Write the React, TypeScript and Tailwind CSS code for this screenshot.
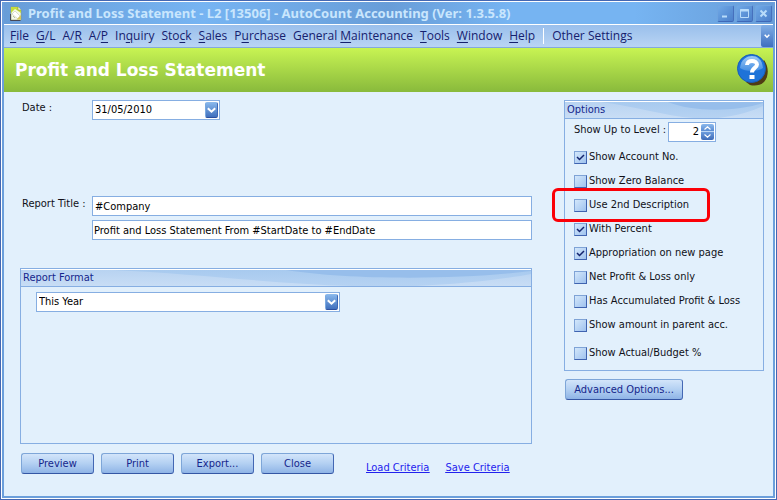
import { useState, type ReactNode } from "react";

const uiFont = "font-['DejaVu_Sans_Condensed','DejaVu_Sans',sans-serif]";

const menuItems: [string, string, string][] = [
  ["", "F", "ile"],
  ["", "G", "/L"],
  ["A/", "R", ""],
  ["A/", "P", ""],
  ["In", "q", "uiry"],
  ["Sto", "c", "k"],
  ["", "S", "ales"],
  ["P", "u", "rchase"],
  ["General ", "M", "aintenance"],
  ["", "T", "ools"],
  ["", "W", "indow"],
  ["", "H", "elp"],
];

const optionItems = [
  { label: "Show Account No.", checked: true },
  { label: "Show Zero Balance", checked: false },
  { label: "Use 2nd Description", checked: false, highlight: true },
  { label: "With Percent", checked: true },
  { label: "Appropriation on new page", checked: true },
  { label: "Net Profit & Loss only", checked: false },
  { label: "Has Accumulated Profit & Loss", checked: false },
  { label: "Show amount in parent acc.", checked: false },
  { label: "Show Actual/Budget %", checked: false, spaced: true },
];

function DocumentIcon() {
  return (
    <svg width="12" height="15" viewBox="0 0 12 15" aria-hidden="true">
      <path d="M1 1h7l3 3v10H1z" fill="#f4f8e8" stroke="#8f9c6a" strokeWidth=".6" />
      <path d="M1 1h7l3 3v3L5 3 1 7z" fill="#c6dc3c" />
      <path d="M8 1v3h3" fill="#fff" stroke="#8a9a3a" strokeWidth=".7" />
      <path d="M2 8l3-3 5 5-2 3z" fill="#fff" stroke="#c4cbb0" strokeWidth=".6" />
      <path d="M3 10l2 2" stroke="#9aa68c" strokeWidth=".7" />
      <path d="M0.500 8v6.500H10.500" fill="none" stroke="#3c3440" strokeWidth=".8" />
      <path d="M7 13l4-4v4.500H7z" fill="#d5c65a" />
    </svg>
  );
}

function CaptionButton({ label, children }: { label: string; children: ReactNode }) {
  return (
    <button
      type="button"
      aria-label={label}
      className="flex h-[17px] w-[17px] items-center justify-center rounded-[2px] border border-t-[#6fa4e0] border-r-[#4670bd] border-b-[#3f68b8] border-l-[#6fa4e0] bg-linear-to-br from-[#70a9e6] to-[#4c80cb]"
    >
      <svg width="11" height="11" viewBox="0 0 11 11" fill="none" stroke="#b9dcfa" aria-hidden="true">
        {children}
      </svg>
    </button>
  );
}

function HelpIcon() {
  return (
    <svg width="32" height="34" viewBox="0 0 32 34" aria-hidden="true">
      <defs>
        <linearGradient id="helpGloss" x1="0" y1="0" x2="0" y2="1">
          <stop offset="0" stopColor="#b4d8fa" />
          <stop offset="1" stopColor="#4a92e4" />
        </linearGradient>
      </defs>
      <path d="M27 7c5 7 5 16 0 22-4 4-10 4-14 3l-4-3z" fill="#4f3c14" />
      <circle cx="14.500" cy="15.500" r="14" fill="#1e73d8" stroke="#1a5db8" />
      <path d="M3 15C4 6 10 3 15 3s10 3 11 12c-5 4-18 4-23 0z" fill="url(#helpGloss)" opacity=".85" />
      <path d="M10 12c0-5.500 10-5.200 10-.500 0 3.500-5 3.500-5 8" fill="none" stroke="#fff" strokeWidth="4" />
      <rect x="12.500" y="22" width="5" height="4" fill="#fff" />
    </svg>
  );
}

function DropGlyph() {
  return (
    <span className="flex h-4 w-[13px] items-center justify-center rounded-[2px] border border-t-[#8db9ea] border-r-[#3d68b6] border-b-[#2c4f9e] border-l-[#7aa9e0] bg-linear-to-b from-[#86b5ea] to-[#4170bd]">
      <svg width="9" height="7" viewBox="0 0 9 7" aria-hidden="true">
        <path d="M0.8 1.2l3.700 3.500L8.200 1.200" fill="none" stroke="#fff" strokeWidth="2" />
      </svg>
    </span>
  );
}

function PanelHeader({ id, title }: { id: string; title: string }) {
  return (
    <div className="relative h-[18px] overflow-hidden border-t border-b border-t-white border-b-[#86aee2] bg-[#c4daf4]">
      <svg
        className="absolute inset-0 h-full w-full"
        viewBox="0 0 200 16"
        preserveAspectRatio="none"
        aria-hidden="true"
      >
        <defs>
          <linearGradient id={id + "Base"} x1="0" y1="0" x2="0" y2="1">
            <stop offset="0" stopColor="#b8d3f1" />
            <stop offset="1" stopColor="#c8ddf5" />
          </linearGradient>
          <linearGradient id={id + "Mid"} x1="0" y1="0" x2="0" y2="1">
            <stop offset="0" stopColor="#a8caef" />
            <stop offset="1" stopColor="#b6d2f2" />
          </linearGradient>
        </defs>
        <path d="M0 0H200V16H0z" fill={`url(#${id}Base)`} />
        <path d="M36 0C70 4 100 14 130 16H155C172 14 190 9 200 4V0z" fill={`url(#${id}Mid)`} />
        <path d="M104 0C128 10 172 10 200 1V0z" fill="#97beeb" />
      </svg>
      <h2 id={id} className="relative pl-[2px] text-[11px] leading-4 text-[#15268c]">
        {title}
      </h2>
    </div>
  );
}

function PushButton({ children, className }: { children: ReactNode; className: string }) {
  return (
    <button
      type="button"
      className={
        "h-[21px] rounded-[3px] border border-t-[#7ea6d8] border-r-[#4468b4] border-b-[#3456a4] border-l-[#7ea6d8] bg-linear-to-b from-[#d3e5fa] via-[#b3d0f2] to-[#8fb4e6] text-[11px] leading-4 text-[#15268c] " +
        className
      }
    >
      {children}
    </button>
  );
}

function OptionCheck({ label, checked, highlight, spaced }: { label: string; checked: boolean; highlight?: boolean; spaced?: boolean }) {
  return (
    <label className={"relative flex h-6 items-center gap-[2px] " + (spaced ? "mt-1" : "")}>
      <span className="relative flex">
        <input
          type="checkbox"
          defaultChecked={checked}
          className="peer h-[13px] w-[13px] appearance-none border border-t-[#7fa3d6] border-r-[#3f63b0] border-b-[#3f63b0] border-l-[#7fa3d6] bg-linear-to-br from-[#d3e7fb] to-[#9fc2ee]"
        />
        <svg
          className="pointer-events-none absolute inset-0 hidden peer-checked:block"
          width="13"
          height="13"
          viewBox="0 0 13 13"
          aria-hidden="true"
        >
          <path d="M3 6l2.500 2.500L10 4" fill="none" stroke="#14246e" strokeWidth="1.500" />
        </svg>
      </span>
      <span>{label}</span>
      {highlight && (
        <span className="pointer-events-none absolute -top-[5px] -left-[22px] h-[34px] w-[158px] rounded-md border-3 border-[#fb0007]" />
      )}
    </label>
  );
}

export default function App() {
  const [level, setLevel] = useState(2);
  const field = "h-5 border border-[#86aee2] bg-white text-[11px] text-black outline-none";

  return (
    <div className={"border border-[#4467b2] bg-white p-px text-[11px] text-[#101018] " + uiFont}>
      <div className="flex min-h-[calc(100vh-4px)] flex-col border-x-2 border-b-2 border-[#6c9fdb] bg-[#e2f0fc]">
        <header className="flex h-[23px] items-center border-b border-white bg-[linear-gradient(90deg,#689dd8,#76b4f2_26%,#689dd8_50%,#76b4f2_66%,#76b4f2_82%,#689dd8)] pr-px pl-[6px]">
          <DocumentIcon />
          <h1 className="ml-[6px] flex-1 truncate font-['Noto_Sans','DejaVu_Sans',sans-serif] text-[13px] leading-5 font-bold text-[#c9e6fd]">
            Profit and Loss Statement - L2 [13506] - AutoCount Accounting (Ver: 1.3.5.8)
          </h1>
          <div className="flex gap-[2px]">
            <CaptionButton label="Minimize">
              <path d="M2 8.500h5" strokeWidth="2" />
            </CaptionButton>
            <CaptionButton label="Maximize">
              <path d="M1.500 1.500h8v8h-8z" />
              <path d="M1 2.500h9" strokeWidth="2" />
            </CaptionButton>
            <CaptionButton label="Close window">
              <path d="M2.500 2.500l6 6M8.500 2.500l-6 6" strokeWidth="2" />
            </CaptionButton>
          </div>
        </header>

        <nav className="flex h-[23px] items-center border-b border-[#83a9dc] bg-linear-to-b from-[#99bfec] to-[#b9d4f3] pl-[6px] font-['Open_Sans','Noto_Sans',sans-serif] text-[12px] leading-5 whitespace-nowrap text-[#15206e]">
          <div className="flex gap-[7px]">
            {menuItems.map(([before, key, after]) => (
              <button type="button" key={before + key + after}>
                {before}
                <u className="underline-offset-2">{key}</u>
                {after}
              </button>
            ))}
          </div>
          <span className="ml-2 h-4 w-px bg-white" />
          <button type="button" className="ml-2">
            Other Settings
          </button>
          <button
            type="button"
            aria-label="More commands"
            className="ml-auto flex h-full w-[12px] items-center justify-center rounded-l-[2px] bg-linear-to-b from-[#80aee6] to-[#3f6fbf]"
          >
            <svg width="6" height="5" viewBox="0 0 6 5" aria-hidden="true">
              <path d="M0.700 0.800L3 3.200L5.300 0.800" fill="none" stroke="#fff" strokeWidth="1.500" />
            </svg>
          </button>
        </nav>

        <div className="flex h-11 items-center justify-between bg-linear-to-b from-[#c8f453] to-[#89ba3c] pr-1 pl-[11px]">
          <h2 className="font-['DejaVu_Sans',sans-serif] text-[17px] leading-6 font-bold text-white">
            Profit and Loss Statement
          </h2>
          <button type="button" aria-label="Help">
            <HelpIcon />
          </button>
        </div>

        <main className="flex flex-1 gap-8 pt-2 pr-[9px] pb-[22px] pl-4">
          <form className="flex flex-1 flex-col" onSubmit={(e) => e.preventDefault()}>
            <div className="flex">
              <label htmlFor="date" className="w-[72px] pl-[2px] leading-4">
                Date :
              </label>
              <div className={"flex w-32 items-center pr-px " + field}>
                <input id="date" defaultValue="31/05/2010" className="min-w-0 flex-1 pl-[2px] outline-none" />
                <button type="button" aria-label="Open calendar">
                  <DropGlyph />
                </button>
              </div>
            </div>

            <div className="mt-[76px] flex">
              <label htmlFor="title1" className="w-[72px] pl-[2px] leading-4 whitespace-nowrap">
                Report Title :
              </label>
              <div className="flex flex-1 flex-col gap-1">
                <input id="title1" defaultValue="#Company" className={"pl-[2px] " + field} />
                <input
                  aria-label="Report title second line"
                  defaultValue="Profit and Loss Statement From #StartDate to #EndDate"
                  className={"pl-px " + field}
                />
              </div>
            </div>

            <section aria-labelledby="format" className="mt-7 flex-1 border border-[#86aee2]">
              <PanelHeader id="format" title="Report Format" />
              <div className="relative mt-[5px] ml-[15px] w-[304px]">
                <select aria-labelledby="format" className={"w-full appearance-none pl-[2px] " + field}>
                  <option>This Year</option>
                </select>
                <span className="pointer-events-none absolute top-[2px] right-[2px]">
                  <DropGlyph />
                </span>
              </div>
            </section>

            <div className="mt-[9px] flex gap-[7px] pl-px">
              <PushButton className="w-[73px]">Preview</PushButton>
              <PushButton className="w-[73px]">Print</PushButton>
              <PushButton className="w-[73px]">Export...</PushButton>
              <PushButton className="w-[73px]">Close</PushButton>
              <div className="ml-[25px] flex items-end gap-4 leading-3 text-[#2222ee] underline">
                <a href="#load">Load Criteria</a>
                <a href="#save">Save Criteria</a>
              </div>
            </div>
          </form>

          <aside className="w-[200px]">
            <section aria-labelledby="options" className="border border-[#86aee2] pb-[5px]">
              <PanelHeader id="options" title="Options" />
              <div className="pl-[9px]">
                <div className="flex h-[26px] items-center whitespace-nowrap">
                  <label htmlFor="level" className="w-[94px] self-start pt-[3px] leading-4">
                    Show Up to Level :
                  </label>
                  <div className={"flex w-12 items-center pr-px " + field}>
                    <input
                      id="level"
                      value={level}
                      onChange={(e) => setLevel(Number(e.target.value) || 0)}
                      className="min-w-0 flex-1 pr-[2px] text-right outline-none"
                    />
                    <span className="flex flex-col overflow-hidden rounded-[2px]">
                      <button
                        type="button"
                        aria-label="Increase level"
                        onClick={() => setLevel(level + 1)}
                        className="flex h-2 w-[13px] items-center justify-center border-b border-[#bcd6f4] bg-linear-to-b from-[#8ab8ec] to-[#5b8cd2]"
                      >
                        <svg width="7" height="4" viewBox="0 0 7 4" aria-hidden="true">
                          <path d="M0.500 3.500L3.500 0.800L6.500 3.500" fill="none" stroke="#fff" strokeWidth="1.200" />
                        </svg>
                      </button>
                      <button
                        type="button"
                        aria-label="Decrease level"
                        onClick={() => setLevel(level - 1)}
                        className="flex h-2 w-[13px] items-center justify-center bg-linear-to-b from-[#6c9bdc] to-[#3f6cb8]"
                      >
                        <svg width="7" height="4" viewBox="0 0 7 4" aria-hidden="true">
                          <path d="M0.500 0.500L3.500 3.200L6.500 0.500" fill="none" stroke="#fff" strokeWidth="1.200" />
                        </svg>
                      </button>
                    </span>
                  </div>
                </div>
                {optionItems.map((item) => (
                  <OptionCheck key={item.label} {...item} />
                ))}
              </div>
            </section>
            <PushButton className="mt-2 ml-px w-[118px] whitespace-nowrap">Advanced Options...</PushButton>
          </aside>
        </main>
      </div>
    </div>
  );
}
